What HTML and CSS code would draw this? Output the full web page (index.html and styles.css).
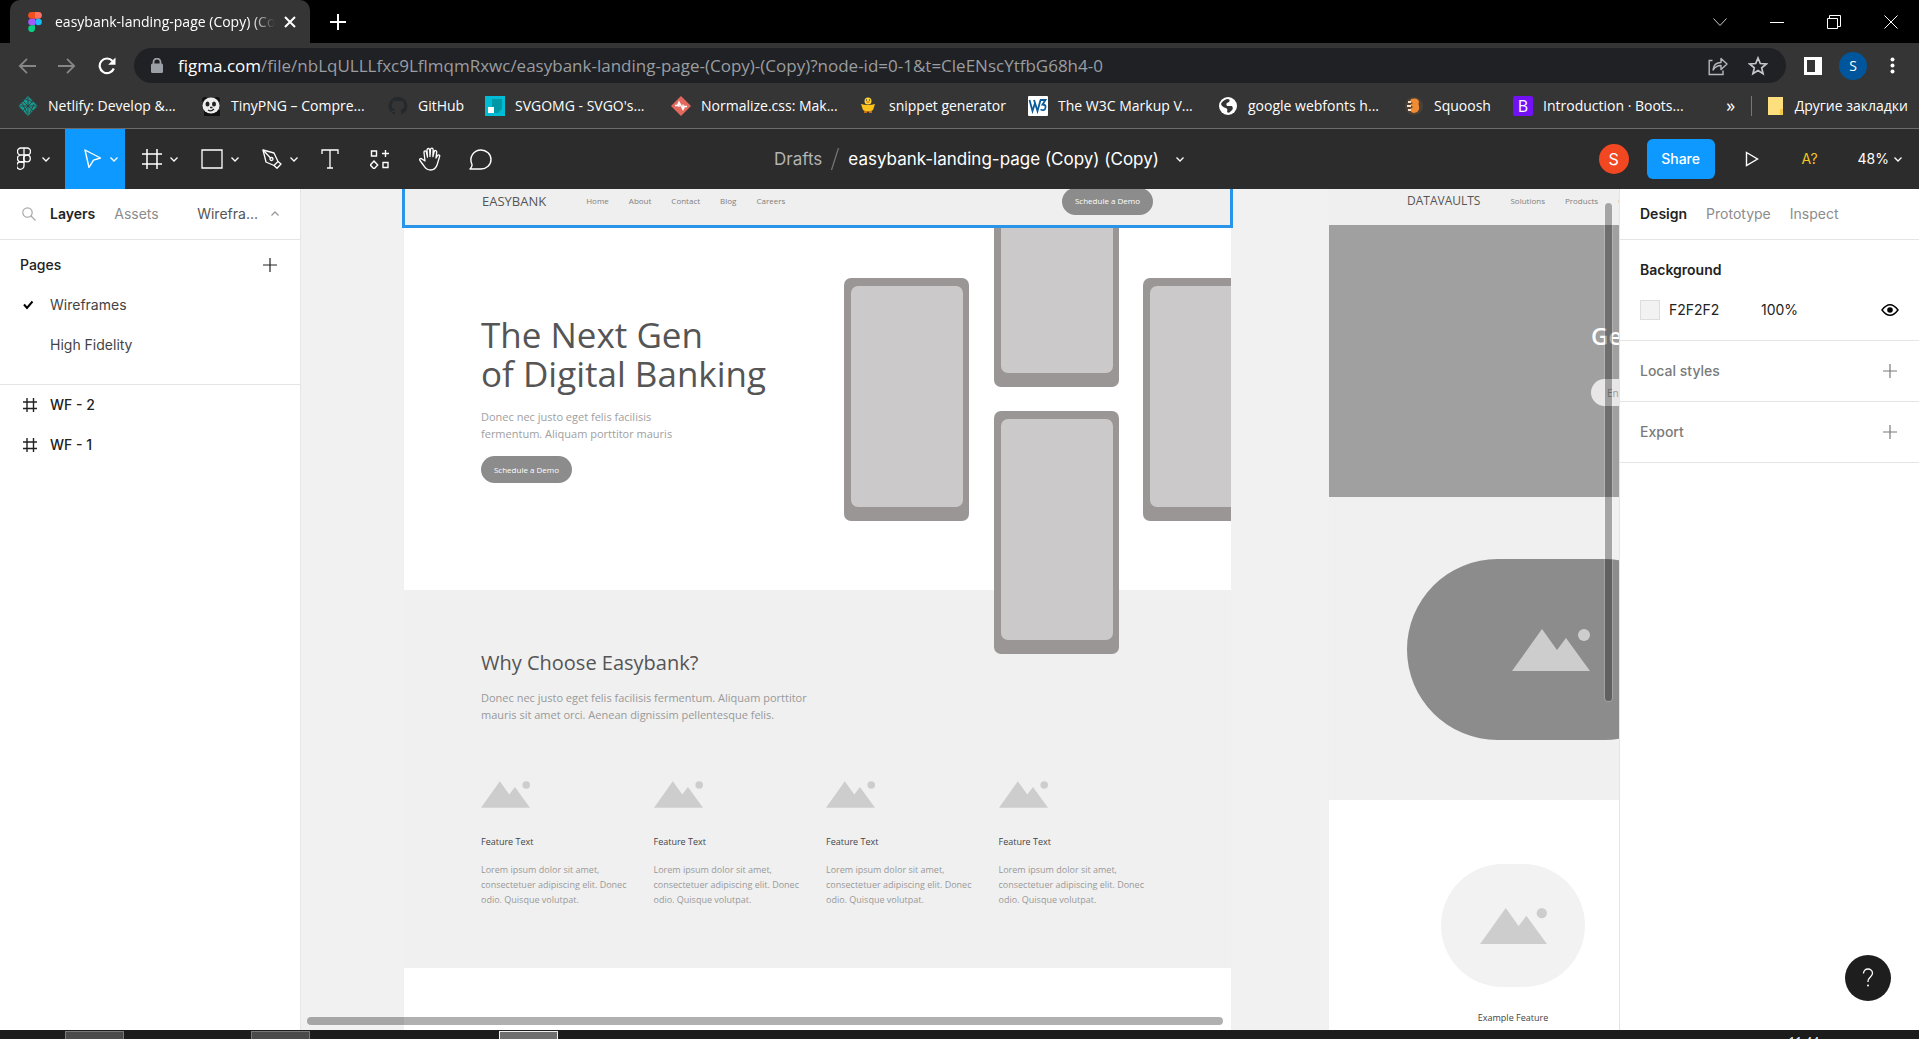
FILE: index.html
```html
<!DOCTYPE html>
<html lang="en">
<head>
<meta charset="utf-8">
<title>easybank-landing-page (Copy) (Copy)</title>
<link rel="stylesheet" href="styles.css">
</head>
<body>
<svg class="sprite" aria-hidden="true">
  <symbol id="chev" viewBox="0 0 10 10"><path d="M1.5 3.5 5 7l3.500-3.500" fill="none" stroke="currentColor" stroke-width="1.300"/></symbol>
  <symbol id="plus" viewBox="0 0 16 16"><path d="M8 1v14M1 8h14" fill="none" stroke="currentColor" stroke-width="1.200"/></symbol>
  <symbol id="frame" viewBox="0 0 20 20"><path d="M5 0v20M15 0v20M0 5h20M0 15h20" fill="none" stroke="currentColor" stroke-width="1.500"/></symbol>
  <symbol id="picture" viewBox="0 0 78 42"><path d="M0 42 30 0l15 21 9-12 24 33z" fill="#cdcdcd"/><circle cx="72" cy="6" r="6" fill="#cdcdcd"/></symbol>
</svg>

<div class="window">
  <header class="chrome">
    <div class="tabs">
      <div class="tab">
        <svg class="tab-logo" viewBox="0 0 14 20"><path d="M3.500 0H7v6.700H3.500a3.300 3.300 0 0 1 0-6.700z" fill="#f24e1e"/><path d="M7 0h3.500a3.300 3.300 0 0 1 0 6.700H7z" fill="#ff7262"/><path d="M3.500 6.700H7v6.600H3.500a3.300 3.300 0 0 1 0-6.600z" fill="#a259ff"/><circle cx="10.500" cy="10" r="3.300" fill="#1abcfe"/><path d="M3.500 13.300H7v3.400a3.400 3.400 0 1 1-3.500-3.400z" fill="#0acf83"/></svg>
        <span class="tab-title">easybank-landing-page (Copy) (Copy)</span>
        <button class="icon-btn tab-close" aria-label="Close tab"><svg width="12" height="12" viewBox="0 0 12 12"><path d="m1 1 10 10M11 1 1 11" stroke="#fff" stroke-width="2"/></svg></button>
      </div>
      <button class="icon-btn new-tab" aria-label="New tab"><svg width="16" height="16" viewBox="0 0 16 16"><path d="M8 0v16M0 8h16" stroke="#fff" stroke-width="2"/></svg></button>
      <div class="win-controls">
        <button class="icon-btn" aria-label="Search tabs"><svg width="14" height="14" viewBox="0 0 14 14"><path d="m.5 3.500 6.500 7 6.500-7" fill="none" stroke="#ccc"/></svg></button>
        <button class="icon-btn" aria-label="Minimize"><svg width="14" height="14" viewBox="0 0 14 14"><path d="M0 7.500h14" stroke="#fff"/></svg></button>
        <button class="icon-btn" aria-label="Restore"><svg width="14" height="14" viewBox="0 0 14 14"><path d="M.5 3.500h10v10H.5zM2.500 3.500v-3h11v11h-3" fill="none" stroke="#fff"/></svg></button>
        <button class="icon-btn" aria-label="Close"><svg width="14" height="14" viewBox="0 0 14 14"><path d="m.5.5 13 13M13.500.5l-13 13" stroke="#fff"/></svg></button>
      </div>
    </div>
    <div class="nav">
      <button class="icon-btn dim" aria-label="Back"><svg width="18" height="16" viewBox="0 0 18 16"><path d="M18 8H2M9 .8 1.800 8 9 15.200" fill="none" stroke="currentColor" stroke-width="1.800"/></svg></button>
      <button class="icon-btn dim" aria-label="Forward"><svg width="18" height="16" viewBox="0 0 18 16"><path d="M0 8h16M9 .8 16.200 8 9 15.200" fill="none" stroke="currentColor" stroke-width="1.800"/></svg></button>
      <button class="icon-btn" aria-label="Reload"><svg width="18" height="18" viewBox="0 0 18 18"><path d="M15.800 11.500A7.300 7.300 0 1 1 14.500 4" fill="none" stroke="#fff" stroke-width="2.200"/><path d="M17.500.5v7.300h-7.300z" fill="#fff"/></svg></button>
      <div class="omnibox">
        <svg width="12" height="16" viewBox="0 0 12 16"><path d="M2.500 7V4a3.500 3.500 0 0 1 7 0v3" fill="none" stroke="#9aa0a6" stroke-width="1.800"/><rect y="5.500" width="12" height="9.500" rx="1.500" fill="#9aa0a6"/></svg>
        <a class="url" href="#"><b>figma.com</b>/file/nbLqULLLfxc9LflmqmRxwc/easybank-landing-page-(Copy)-(Copy)?node-id=0-1&amp;t=CleENscYtfbG68h4-0</a>
        <button class="icon-btn" aria-label="Share page"><svg width="20" height="20" viewBox="0 0 20 20"><path d="M4.500 4.500H1.200V18.500H15v-4" fill="none" stroke="#b4b7bc" stroke-width="1.400"/><path d="M5 14c.5-5 3.500-7.500 8-7.500V2.500L19 8l-6 5.500v-4c-3.500 0-6 1.500-8 4.500z" fill="none" stroke="#b4b7bc" stroke-width="1.400" stroke-linejoin="round"/></svg></button>
        <button class="icon-btn" aria-label="Bookmark"><svg width="20" height="20" viewBox="0 0 20 20"><path d="m10 2 2.300 5.500 6 .5-4.600 3.900 1.400 5.800L10 14.600l-5.100 3.100 1.400-5.800L1.700 8l6-.5z" fill="none" stroke="#c4c7cc" stroke-width="1.700"/></svg></button>
      </div>
      <button class="icon-btn" aria-label="Side panel"><svg width="18" height="18" viewBox="0 0 18 18"><path d="M0 0h18v18H0z" fill="#fff"/><path d="M3 3h8v12H3z" fill="#353535"/></svg></button>
      <button class="profile" aria-label="Profile">S</button>
      <button class="icon-btn" aria-label="Menu"><svg width="5" height="17" viewBox="0 0 5 17"><circle cx="2.500" cy="2.500" r="2"/><circle cx="2.500" cy="8.500" r="2"/><circle cx="2.500" cy="14.500" r="2"/></svg></button>
    </div>
    <nav class="bookmarks">
      <a href="#"><svg viewBox="0 0 20 20"><path d="m10 0 9.500 10L10 20 .5 10z" fill="#139b92"/><path d="M5 5l10 10M15 5 5 15M1 10h18M10 1v18M7 3l8 3M4 7l5 10M12 17l4-9" stroke="#353535" stroke-width=".8"/></svg>Netlify: Develop &amp;...</a>
      <a href="#"><svg viewBox="0 0 20 20"><circle cx="4" cy="4" r="3" fill="#111"/><circle cx="16" cy="4" r="3" fill="#111"/><path d="M3 14h16v6H3z" fill="#111"/><ellipse cx="10" cy="9.500" rx="8.500" ry="8" fill="#eee"/><ellipse cx="6.500" cy="8" rx="2" ry="2.500" fill="#222"/><ellipse cx="13" cy="8" rx="2" ry="2.500" fill="#222"/><path d="M7 14q3 2 6-1M9 11.500h2.500" stroke="#222" fill="none" stroke-width="1.300"/></svg>TinyPNG – Compre...</a>
      <a href="#"><svg viewBox="0 0 20 20"><path d="M10 1a9 9 0 0 0-3 17.600v-2.400c-2.500.5-3-1-3-1l-1.200-1.700 1.700.6c1 1.400 1.700 1 2.500.8l.6-1.200c-2-.3-4-1-4-4.400l1-2.400V4.300l2.400 1a8 8 0 0 1 6 0l2.400-1v2.600l1 2.400c0 3.400-2 4.100-4 4.400.6.600.6 1.500.6 2.300v2.600A9 9 0 0 0 10 1z" fill="#24292e"/></svg>GitHub</a>
      <a href="#"><svg viewBox="0 0 20 20"><path d="M0 0h20v20H0z" fill="#00bcd4"/><path d="M7 3h10v10l-4 4H9V11H7z" fill="#0097a7"/><path d="M3 11h6v6H3z" fill="#fff"/></svg>SVGOMG - SVGO's...</a>
      <a href="#"><svg viewBox="0 0 20 20"><path d="m10 0 10 10-10 10L0 10z" fill="#e3695f"/><path d="M4 9.500h2.500L8 6l4 7.500 1.500-3H16M8 6v5M12 13.500v-5" fill="none" stroke="#fff" stroke-width="1.400"/></svg>Normalize.css: Mak...</a>
      <a href="#"><svg viewBox="0 0 20 20"><circle cx="9" cy="5" r="3.500" fill="#ffd83b"/><path d="M2 8q7 2 14 0l-2 6q-5 3-10 0z" fill="#fcc21b"/><circle cx="7.500" cy="4" r=".7" fill="#333"/><circle cx="10.500" cy="4" r=".7" fill="#333"/><path d="M7.500 6h3M5 16h3m2 0h3" stroke="#f07c12" stroke-width="1.500"/></svg>snippet generator</a>
      <a href="#"><svg viewBox="0 0 20 20"><rect width="20" height="20" rx="1" fill="#fff"/><path d="m1.500 4 3 11 2.500-8 2.500 8 3-11M7 7 6 4M12 4h5.500l-3 4.500q3.500 0 3 3-.5 4-5 2" fill="none" stroke="#0b5a9c" stroke-width="1.800"/></svg>The W3C Markup V...</a>
      <a href="#"><svg viewBox="0 0 20 20"><circle cx="10" cy="10" r="9" fill="#fff"/><path d="M9 3q4 0 2 3-4 1-2 4h5q2 3-1 5-2 3-4 1 1-3-1-4-4-1-5-4 1-3 6-5z" fill="#353535"/></svg>google webfonts h...</a>
      <a href="#"><svg viewBox="0 0 20 20"><circle cx="10" cy="10" r="9" fill="#4b4136"/><path d="M7 3q7-2 8 3-1 2 0 4 1 6-5 7-4-1-4-4l3-2-3-2 3-2-3-1z" fill="#f28c33"/><path d="M4 5h3v2H4zm-1 4h4v2H3zm1 4h3v2H4z" fill="#ffe0c2"/></svg>Squoosh</a>
      <a href="#"><span class="bs-icon">B</span>Introduction · Boots...</a>
      <button class="icon-btn more" aria-label="More bookmarks">»</button>
      <a class="folder" href="#"><svg viewBox="0 0 20 20"><path d="M2 1h15v18H2z" fill="#fddf7d"/><path d="M14 13h3v6h-3z" fill="#f5ca47"/></svg>Другие закладки</a>
    </nav>
  </header>

  <div class="toolbar">
    <div class="tools">
      <button class="tool menu" aria-label="Main menu"><svg width="14" height="24" viewBox="0 0 14 24"><g fill="none" stroke="currentColor" stroke-width="1.300"><path d="M7 1H4a3.300 3.300 0 0 0 0 7h3zM7 1h3a3.300 3.300 0 0 1 0 7H7zM7 8H4a3.300 3.300 0 0 0 0 7h3z"/><circle cx="10" cy="11.500" r="3.300"/><path d="M7 15H4a3.700 3.700 0 1 0 3 3.700z"/></g></svg><svg class="ch"><use href="#chev"/></svg></button>
      <button class="tool active" aria-label="Move"><svg width="18" height="20" viewBox="0 0 18 20"><path d="m1 1 15.500 8-7 2.200L5 18.500z" fill="none" stroke="currentColor" stroke-width="1.400" stroke-linejoin="round"/></svg><svg class="ch"><use href="#chev"/></svg></button>
      <button class="tool" aria-label="Frame"><svg width="20" height="20"><use href="#frame"/></svg><svg class="ch"><use href="#chev"/></svg></button>
      <button class="tool" aria-label="Rectangle"><svg width="22" height="20" viewBox="0 0 22 20"><path d="M1 1h20v18H1z" fill="none" stroke="currentColor" stroke-width="1.300"/></svg><svg class="ch"><use href="#chev"/></svg></button>
      <button class="tool" aria-label="Pen"><svg width="20" height="20" viewBox="0 0 20 20"><g fill="none" stroke="currentColor" stroke-width="1.300" stroke-linejoin="round"><path d="m1 1 11 3 4 8.500-4 4L4 13z"/><path d="m1 1 7.500 8"/><circle cx="9.500" cy="10" r="1.500"/><path d="m16 12.500 3 2.500-4 4.200-3-2.700"/></g></svg><svg class="ch"><use href="#chev"/></svg></button>
      <button class="tool single text" aria-label="Text"><svg width="18" height="20" viewBox="0 0 18 20"><path d="M1 5V1h16v4M9 1v18M6 19h6" fill="none" stroke="currentColor" stroke-width="1.300"/></svg></button>
      <button class="tool single" aria-label="Resources"><svg width="20" height="20" viewBox="0 0 20 20"><path d="M1.500 2h5v5h-5zM13 13.500h5v5h-5zM15.500 1v7M12 4.500h7M4 12l3.700 4L4 20 .3 16z" fill="none" stroke="currentColor" stroke-width="1.400"/></svg></button>
      <button class="tool single" aria-label="Hand"><svg width="22" height="24" viewBox="0 0 22 24"><path d="M6 14 5 5.500c-.2-2 2-2.300 2.400-.5L8.500 10 8 3c0-2 2.500-2 2.700 0L11 9.500l.5-7c.2-1.800 2.600-1.700 2.600.2l-.2 7 1.300-5.200c.5-1.800 2.700-1 2.500.7L17 11l1.600-2.500c1-1.300 2.500-.4 2 1l-2.400 8C17 21.500 15 23 11.500 23 8 23 6.500 21.500 5 19l-4-5.500c-1-1.500.8-2.700 2-1.500z" fill="none" stroke="currentColor" stroke-width="1.300" stroke-linejoin="round"/></svg></button>
      <button class="tool single" aria-label="Comment"><svg width="23" height="21" viewBox="0 0 23 21"><path d="M1 20c1.500-1.500 2.200-3 2-4.500C-.5 8 5 1 12 1c5.500 0 10 4 10 9.500S17.500 20 12 20z" fill="none" stroke="currentColor" stroke-width="1.400" stroke-linejoin="round"/></svg></button>
    </div>
    <div class="doc">
      <a href="#">Drafts</a><svg width="8" height="22" viewBox="0 0 8 22"><path d="M7.500 0 .5 22" stroke="#777" stroke-width="1.200"/></svg>
      <button class="doc-name">easybank-landing-page (Copy) (Copy)<svg class="ch"><use href="#chev"/></svg></button>
    </div>
    <div class="actions">
      <span class="avatar">S</span>
      <button class="share">Share</button>
      <button class="play" aria-label="Present"><svg width="14" height="16" viewBox="0 0 14 16"><path d="M1.500 1.500 12.500 8l-11 6.500z" fill="none" stroke="#fff" stroke-width="1.400"/></svg></button>
      <button class="fonts" aria-label="Missing fonts">A?</button>
      <button class="zoom">48%<svg class="ch"><use href="#chev"/></svg></button>
    </div>
  </div>

  <main class="editor">
    <aside class="layers">
      <div class="panel-tabs">
        <svg width="14" height="14" viewBox="0 0 14 14"><circle cx="5.500" cy="5.500" r="4.700" fill="none" stroke="#aaa" stroke-width="1.200"/><path d="m9 9 4.500 4.500" stroke="#aaa" stroke-width="1.200"/></svg>
        <button class="on">Layers</button><button>Assets</button>
        <button class="page-pick">Wirefra...<svg class="ch up"><use href="#chev"/></svg></button>
      </div>
      <section class="pages">
        <h2>Pages <button class="add" aria-label="Add page"><svg width="16" height="16"><use href="#plus"/></svg></button></h2>
        <a href="#"><svg width="12" height="10" viewBox="0 0 12 10"><path d="m1 4.500 3 3.500L9.500 1.500" fill="none" stroke="#000" stroke-width="2"/></svg>Wireframes</a>
        <a href="#"><i></i>High Fidelity</a>
      </section>
      <section class="tree">
        <a href="#"><svg width="14" height="14" viewBox="0 0 14 14"><path d="M4 0v14M10.500 0v14M0 4h14M0 10.500h14" stroke="#222" stroke-width="1.400"/></svg>WF - 2</a>
        <a href="#"><svg width="14" height="14" viewBox="0 0 14 14"><path d="M4 0v14M10.500 0v14M0 4h14M0 10.500h14" stroke="#222" stroke-width="1.400"/></svg>WF - 1</a>
      </section>
    </aside>

    <div class="canvas">
      <article class="art art-one">
        <div class="site-head selected">
          <strong>EASYBANK</strong>
          <a href="#">Home</a><a href="#">About</a><a href="#">Contact</a><a href="#">Blog</a><a href="#">Careers</a>
          <button class="demo">Schedule a Demo</button>
        </div>
        <div class="hero">
          <h1>The Next Gen<br>of Digital Banking</h1>
          <p>Donec nec justo eget felis facilisis<br>fermentum. Aliquam porttitor mauris</p>
          <button class="demo">Schedule a Demo</button>
        </div>
        <div class="why">
          <h3>Why Choose Easybank?</h3>
          <p class="lead">Donec nec justo eget felis facilisis fermentum. Aliquam porttitor<br>mauris sit amet orci. Aenean dignissim pellentesque felis.</p>
          <div class="features">
            <div><svg><use href="#picture"/></svg><h4>Feature Text</h4><p>Lorem ipsum dolor sit amet,<br>consectetuer adipiscing elit. Donec<br>odio. Quisque volutpat.</p></div>
            <div><svg><use href="#picture"/></svg><h4>Feature Text</h4><p>Lorem ipsum dolor sit amet,<br>consectetuer adipiscing elit. Donec<br>odio. Quisque volutpat.</p></div>
            <div><svg><use href="#picture"/></svg><h4>Feature Text</h4><p>Lorem ipsum dolor sit amet,<br>consectetuer adipiscing elit. Donec<br>odio. Quisque volutpat.</p></div>
            <div><svg><use href="#picture"/></svg><h4>Feature Text</h4><p>Lorem ipsum dolor sit amet,<br>consectetuer adipiscing elit. Donec<br>odio. Quisque volutpat.</p></div>
          </div>
        </div>
        <div class="phone phone-a"></div>
        <div class="phone phone-b"></div>
        <div class="phone phone-c"></div>
        <div class="phone phone-d"></div>
      </article>

      <article class="art art-two">
        <div class="site-head">
          <strong>DATAVAULTS</strong>
          <a href="#">Solutions</a><a href="#">Products</a><a href="#">Company</a>
        </div>
        <div class="banner">
          <h1>Get Started</h1>
          <input class="email" type="text" placeholder="Enter email" aria-label="Email">
        </div>
        <div class="media"><div class="pill"><svg><use href="#picture"/></svg></div></div>
        <div class="example"><div class="pill"><svg><use href="#picture"/></svg></div><h4>Example Feature</h4></div>
      </article>
      <div class="scroll-v"></div>
      <div class="scroll-h"></div>
    </div>

    <aside class="props">
      <div class="panel-tabs"><button class="on">Design</button><button>Prototype</button><button>Inspect</button></div>
      <section class="background">
        <h2>Background</h2>
        <div class="fill"><span class="swatch"></span><input type="text" value="F2F2F2" aria-label="Colour"><input type="text" value="100%" aria-label="Opacity">
        <button class="add" aria-label="Visibility"><svg width="18" height="12" viewBox="0 0 18 12"><path d="M1 6q8-10.500 16 0Q9 16.500 1 6z" fill="none" stroke="#000" stroke-width="1.400"/><circle cx="9" cy="6" r="2.800"/></svg></button></div>
      </section>
      <section class="row">Local styles <button class="add" aria-label="Add style"><svg width="16" height="16"><use href="#plus"/></svg></button></section>
      <section class="row">Export <button class="add" aria-label="Add export"><svg width="16" height="16"><use href="#plus"/></svg></button></section>
      <button class="help" aria-label="Help"><svg width="12" height="20" viewBox="0 0 12 20"><path d="M1.500 5.500C1.500 2.500 3.500 1 6 1s4.500 1.700 4.500 4.200C10.500 9 6 9 6 13.500V14" fill="none" stroke="#fff" stroke-width="1.300"/><circle cx="6" cy="17.500" r="1" fill="#fff"/></svg></button>
    </aside>
  </main>

  <footer class="taskbar"><i></i><i></i><i class="front"></i><time>11:44</time></footer>
</div>
</body>
</html>
```

FILE: styles.css
```css
* { box-sizing: border-box; }
body { margin: 0; font: 14px/20px Inter, sans-serif; color: #222; }
h1, h2, h3, h4, p { margin: 0; }
a { color: inherit; text-decoration: none; }
button { border: 0; padding: 0; margin: 0; background: none; color: inherit; font: inherit; display: flex; align-items: center; justify-content: center; }
input { border: 0; padding: 0; background: none; font: inherit; color: inherit; }
svg { display: block; flex: none; }
.sprite { position: absolute; width: 0; height: 0; }
.ch { width: 10px; height: 10px; }
.up { transform: rotate(180deg); }
.window { height: 100vh; display: flex; flex-direction: column; overflow: hidden; }

/* browser */
.chrome { background: #353535; color: #fff; font-family: "Open Sans", sans-serif; border-bottom: 1px solid #6b6b6b; flex: none; }
.tabs { height: 43px; background: #000; display: flex; align-items: center; padding-left: 10px; }
.tab { width: 300px; height: 43px; background: #353535; border-radius: 10px 10px 0 0; display: flex; align-items: center; padding: 0 14px 0 18px; }
.tab-logo { width: 14px; height: 20px; }
.tab-title { flex: 1; margin: 0 9px 0 13px; overflow: hidden; white-space: nowrap; -webkit-mask-image: linear-gradient(to left, transparent, #000 24px); mask-image: linear-gradient(to left, transparent, #000 24px); }
.new-tab { margin-left: 20px; }
.win-controls { margin-left: auto; display: flex; }
.win-controls button { width: 57px; height: 43px; }
.nav { height: 45px; display: flex; align-items: center; padding: 0 24px 0 18px; }
.nav > .dim { color: #868686; margin-right: 22px; }
.omnibox { flex: 1; height: 35px; margin: 0 18px; border-radius: 18px; background: #202124; color: #9a9da1; display: flex; align-items: center; gap: 20px; padding: 0 18px 0 17px; font-size: 17px; }
.omnibox svg:first-child { margin-right: -5px; }
.omnibox > .icon-btn svg { margin: 0; }
.url { flex: 1; white-space: nowrap; overflow: hidden; line-height: 26px; }
.url b { font-weight: 400; color: #fff; }
.profile { width: 28px; height: 28px; border-radius: 50%; background: #00569c; margin: 0 23px 0 17px; }
.nav circle { fill: #fff; }
.bookmarks { height: 40px; display: grid; grid-template-columns: 183px 187px 97px 186px 188px 169px 190px 186px 109px 190px 1fr auto; align-items: center; padding: 0 11px 4px 18px; white-space: nowrap; }
.bookmarks a { display: flex; align-items: center; gap: 10px; }
.bookmarks svg, .bs-icon { width: 20px; height: 20px; flex: none; }
.bs-icon { background: #7311f6; border-radius: 2px; text-align: center; font-size: 16px; }
.more { font-size: 18px; padding: 0 0 2px 8px; }
.bookmarks .folder { border-left: 1px solid #777; padding-left: 14px; gap: 9px; }

/* figma toolbar */
.toolbar { height: 60px; flex: none; background: #2c2c2c; color: #fff; display: grid; grid-template-columns: 1fr auto 1fr; align-items: center; }
.tools { display: flex; }
.tool { width: 60px; height: 60px; gap: 7px; padding-left: 11px; }
.tool.menu { width: 65px; gap: 10px; padding-left: 3px; }
.tool.active { background: #0d99ff; padding-left: 12px; }
.tool.single { width: 50px; padding: 0; }
.doc { display: flex; align-items: center; gap: 9px; font-size: 17px; white-space: nowrap; padding-left: 40px; }
.doc > a { color: #b3b3b3; }
.doc-name { gap: 16px; }
.actions { display: flex; justify-content: flex-end; align-items: center; padding-right: 16px; }
.avatar { width: 30px; height: 30px; border-radius: 50%; background: #f24822; font-size: 16px; line-height: 30px; text-align: center; }
.share { width: 68px; height: 40px; border-radius: 6px; background: #0d99ff; margin: 0 30px 0 18px; font-weight: 500; }
.fonts { color: #f2c522; margin: 0 40px 0 43px; }
.zoom { gap: 4px; }

/* panels */
.editor { flex: 1; min-height: 0; display: flex; }
.layers { width: 301px; border-right: 1px solid #e5e5e5; background: #fff; flex: none; }
.props { width: 300px; border-left: 1px solid #e5e5e5; background: #fff; flex: none; position: relative; }
.panel-tabs { height: 51px; border-bottom: 1px solid #e5e5e5; display: flex; align-items: center; gap: 19px; padding: 0 20px; color: #8c8c8c; }
.layers .panel-tabs { padding-left: 22px; }
.layers .panel-tabs > svg { margin-right: -5px; }
.panel-tabs .on { color: #222; font-weight: 600; }
.panel-tabs .page-pick { margin-left: auto; color: #555; gap: 12px; }
.page-pick svg { color: #999; }
h2 { font-size: 14px; font-weight: 500; display: flex; justify-content: space-between; align-items: center; }
.pages { height: 145px; border-bottom: 1px solid #e5e5e5; padding-top: 5px; }
.pages h2 { height: 40px; padding: 0 22px 0 20px; }
.layers section a { display: flex; align-items: center; height: 40px; padding-left: 23px; gap: 13px; color: #444; }
.pages svg, .pages i { margin-right: 2px; }
.pages i { width: 12px; }
.pages h2 svg { margin: 0; }
.tree a { font-weight: 500; }
.layers .tree a { color: #222; }
.background { height: 101px; border-bottom: 1px solid #e5e5e5; padding: 20px 20px 0; }
.fill { display: flex; align-items: center; height: 40px; }
.background h2 { height: 20px; margin-bottom: 10px; font-weight: 600; }
.swatch { width: 20px; height: 20px; background: #f2f2f2; border: 1px solid #ddd; margin-right: 9px; }
.fill input { width: 92px; }
.add { margin-left: auto; }
.row { height: 61px; display: flex; align-items: center; border-bottom: 1px solid #e5e5e5; padding: 0 21px 0 20px; color: #7a7a7a; font-weight: 500; }
.help { position: absolute; right: 28px; bottom: 29px; width: 46px; height: 46px; border-radius: 50%; background: #1e1e1e; }

/* canvas */
.canvas { flex: 1; min-width: 0; position: relative; overflow: hidden; background: #f1f1f1; font-family: "Open Sans", sans-serif; color: #555; }
.art { position: absolute; top: -12px; width: 827px; height: 860px; background: #fff; }
.art-one { left: 103px; }
.art-two { left: 1028px; }
.site-head { height: 48px; background: #efefef; display: flex; align-items: center; gap: 20px; padding: 0 78px; font-size: 8px; color: #808080; }
.site-head strong { font-size: 12px; font-weight: 400; color: #555; margin-right: 10px; }
.site-head.selected { height: 49px; padding-bottom: 1px; position: relative; z-index: 2; outline: 3px solid #2a95e8; outline-offset: -1px; }
.selected strong { font-size: 13px; margin-right: 20px; }
.demo { width: 91px; height: 27px; border-radius: 14px; background: #8c8c8c; color: #fff; font-size: 8px; }
.site-head .demo { margin-left: auto; }
.hero { height: 364px; padding: 89px 77px 0; }
.hero h1 { font-size: 35px; line-height: 39px; font-weight: 400; }
.hero p { font-size: 11px; line-height: 17px; color: #a0a0a0; margin: 15px 0 14px; }
.why { height: 378px; background: #f0f0f0; padding: 60px 60px 0 77px; }
.why h3 { font-size: 20px; line-height: 26px; font-weight: 400; }
.lead { font-size: 11px; line-height: 17px; color: #999; margin: 13px 0 58px; }
.features { display: grid; grid-template-columns: repeat(4, 1fr); }
.features svg { width: 49px; height: 27px; }
h4 { font-size: 9px; line-height: 15px; font-weight: 400; color: #444; }
.features h4 { margin: 26px 0 13px; }
.features p { font-size: 9px; line-height: 15px; color: #999; white-space: nowrap; }
.phone { position: absolute; width: 125px; height: 243px; border-radius: 7px; background: #9a9695; display: flex; padding: 8px 6px 14px 7px; }
.phone::before { content: ""; flex: 1; border-radius: 7px; background: #cbc9c9; }
.phone-a { left: 440px; top: 101px; }
.phone-b { left: 590px; top: -33px; }
.phone-c { left: 739px; top: 101px; width: 88px; padding-right: 0; border-radius: 7px 0 0 7px; }
.phone-c::before { border-radius: 7px 0 0 7px; }
.phone-d { left: 590px; top: 234px; }
.banner { height: 272px; background: #a0a0a0; padding: 94px 0 0 262px; color: #fff; }
.banner h1 { font-size: 24px; line-height: 34px; font-weight: 600; }
.email { display: block; width: 200px; height: 27px; margin-top: 26px; border-radius: 14px; background: #e8e6e7; padding-left: 16px; font-size: 10px; }
.email::placeholder { color: #999; }
.pill { display: flex; align-items: center; justify-content: center; }
.media { height: 303px; background: #f0f0f0; padding: 62px 0 0 78px; }
.media .pill { width: 288px; height: 181px; border-radius: 91px; background: #8c8c8c; }
.media svg { width: 78px; height: 42px; }
.example { padding: 64px 0 0 112px; width: 256px; text-align: center; }
.example .pill { width: 144px; height: 123px; border-radius: 62px; background: #f2f2f2; }
.example svg { width: 67px; height: 36px; }
.example h4 { margin-top: 23px; }
.scroll-v, .scroll-h { position: absolute; z-index: 3; background: rgba(0, 0, 0, .31); border-radius: 5px; box-shadow: 0 0 0 1px rgba(255, 255, 255, .2); }
.scroll-v { right: 7px; top: 14px; width: 7px; height: 498px; }
.scroll-h { left: 6px; bottom: 5px; width: 916px; height: 8px; }

.taskbar { height: 9px; flex: none; background: #1c1c1c; display: flex; padding: 1px 100px 0 65px; overflow: hidden; color: #fff; font: 12px/16px "Open Sans", sans-serif; }
.taskbar i { width: 59px; height: 20px; background: #4a4a4a; border: 1px solid #777; margin-right: 127px; }
.taskbar i + i { margin-right: 189px; }
.taskbar .front { background: #6e6e6e; border-color: #eee; }
.taskbar time { margin-left: auto; padding-top: 3px; }
```
